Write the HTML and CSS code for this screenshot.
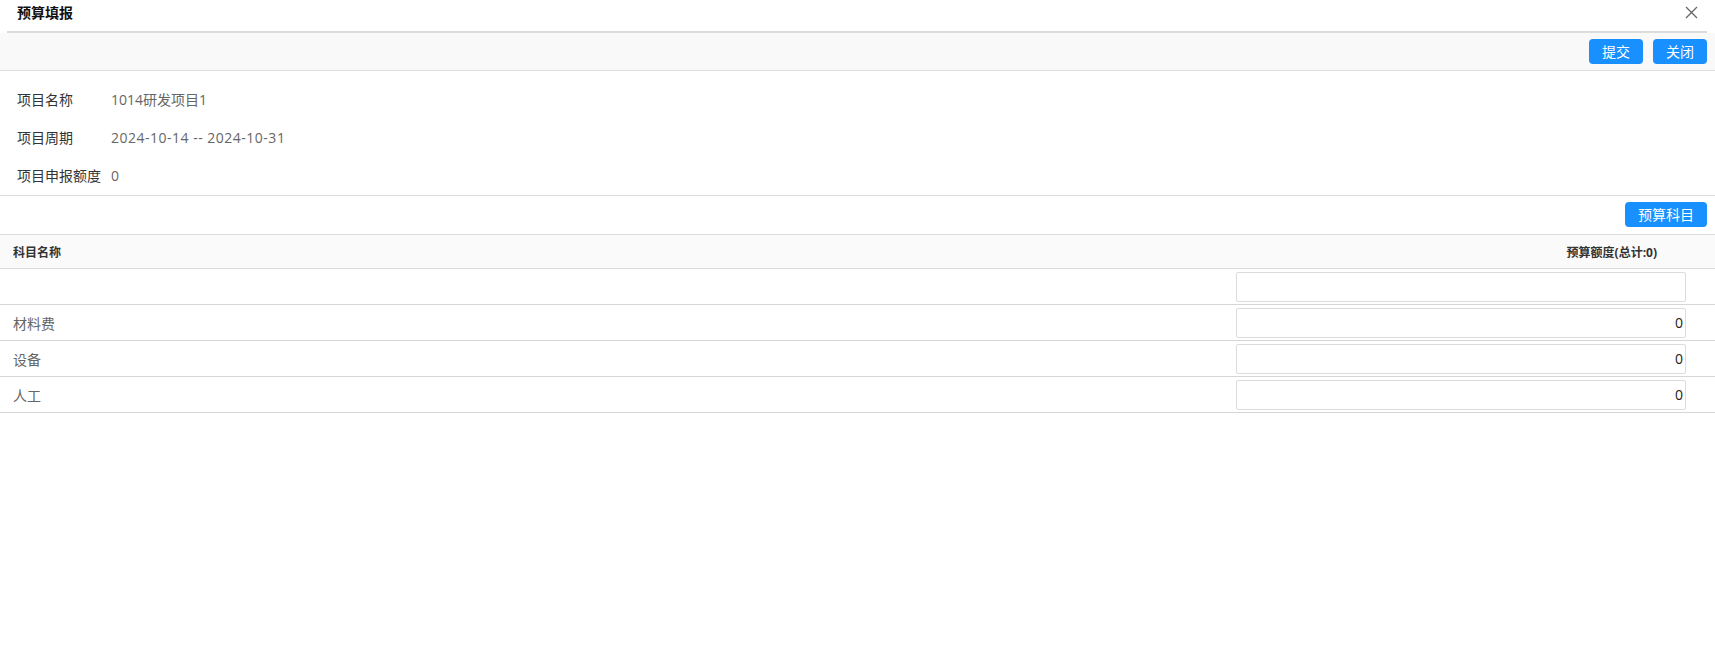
FILE: index.html
```html
<!DOCTYPE html>
<html lang="zh-CN">
<head>
<meta charset="utf-8">
<title>预算填报</title>
<link rel="stylesheet" href="styles.css">
</head>
<body>
<div class="dialog">
  <div class="dialog-header">
    <span class="dialog-title">预算填报</span>
    <span class="dialog-close" aria-label="关闭">
      <svg width="13" height="13" viewBox="0 0 13 13"><path d="M1 1L12 12M12 1L1 12" stroke="#666" stroke-width="1.3" fill="none"/></svg>
    </span>
  </div>
  <div class="toolbar toolbar-top">
    <button class="btn">提交</button>
    <button class="btn">关闭</button>
  </div>
  <div class="info">
    <div class="info-row"><span class="info-label">项目名称</span><span class="info-value">1014研发项目1</span></div>
    <div class="info-row"><span class="info-label">项目周期</span><span class="info-value info-date">2024-10-14 -- 2024-10-31</span></div>
    <div class="info-row"><span class="info-label">项目申报额度</span><span class="info-value">0</span></div>
  </div>
  <div class="toolbar toolbar-table">
    <button class="btn">预算科目</button>
  </div>
  <table class="grid">
    <thead>
      <tr><th class="col-name">科目名称</th><th class="col-amount">预算额度(总计:0)</th></tr>
    </thead>
    <tbody>
      <tr><td class="col-name"></td><td class="col-input"><input class="amount" type="text" value=""></td></tr>
      <tr><td class="col-name">材料费</td><td class="col-input"><input class="amount" type="text" value="0"></td></tr>
      <tr><td class="col-name">设备</td><td class="col-input"><input class="amount" type="text" value="0"></td></tr>
      <tr><td class="col-name">人工</td><td class="col-input"><input class="amount" type="text" value="0"></td></tr>
    </tbody>
  </table>
</div>
</body>
</html>
```

FILE: styles.css
```css
* { box-sizing: border-box; }
html, body { margin: 0; padding: 0; background: #fff; }
body {
  font-family: "Open Sans", "Noto Sans CJK SC", sans-serif;
  font-size: 14px;
  color: #333;
}
.dialog-header {
  margin: 0 8px 0 7px;
  height: 33px;
  border-bottom: 2px solid #dcdcdc;
  display: flex;
  justify-content: space-between;
  align-items: flex-start;
  padding: 0 10px;
}
.dialog-title {
  font-weight: bold;
  color: #111;
  line-height: 26px;
  font-size: 14px;
}
.dialog-close {
  display: flex;
  margin-top: 6px;
  margin-right: -1px;
}
.toolbar {
  display: flex;
  justify-content: flex-end;
  gap: 10px;
  padding: 6px 8px 0 8px;
}
.toolbar-top {
  background: #f9f9f9;
  height: 38px;
  border-bottom: 1px solid #dcdcdc;
}
.toolbar-table {
  height: 38px;
}
.btn {
  font-family: "Noto Sans CJK SC", sans-serif;
  font-size: 14px;
  height: 25px;
  line-height: 25px;
  padding: 0 13px;
  border: none;
  border-radius: 4px;
  background: #1890ff;
  color: #fff;
  cursor: pointer;
}
.info {
  padding: 9px 0 1px 0;
  border-bottom: 1px solid #dcdcdc;
}
.info-row {
  display: flex;
  height: 38px;
  align-items: center;
}
.info-label {
  width: 111px;
  padding-left: 17px;
  color: #333;
}
.info-value {
  color: #666;
}
.info-date {
  letter-spacing: 0.5px;
}
.grid {
  width: 100%;
  border-collapse: collapse;
  table-layout: fixed;
}
.grid th {
  background: #fafafa;
  font-size: 12px;
  font-weight: bold;
  color: #333;
  height: 34px;
  border-top: 1px solid #dcdcdc;
  border-bottom: 1px solid #dcdcdc;
  padding: 0;
}
.grid th.col-name { text-align: left; padding-left: 13px; }
.grid th.col-amount { text-align: right; padding-right: 58px; width: 489px; }
.grid td {
  height: 36px;
  border-bottom: 1px solid #d6d6d6;
  padding: 0;
  vertical-align: middle;
}
.grid td.col-name {
  padding-left: 13px;
  color: #666;
}
.grid td.col-input {
  padding: 0 29px 0 10px;
}
.amount {
  display: block;
  width: 450px;
  height: 30px;
  border: 1px solid #dcdcdc;
  border-radius: 2px;
  text-align: right;
  padding: 0 2px 0 4px;
  font-family: "Open Sans", "Noto Sans CJK SC", sans-serif;
  font-size: 14px;
  color: #222;
  background: #fff;
  outline: none;
}
```
